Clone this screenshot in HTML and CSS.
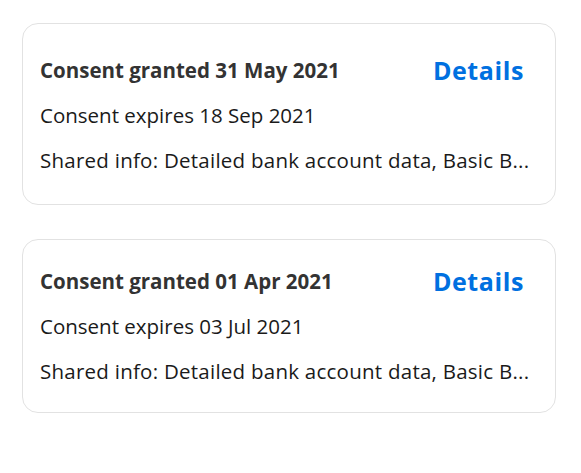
FILE: index.html
```html
<!DOCTYPE html>
<html lang="en">
<head>
<meta charset="utf-8">
<title>Consents</title>
<link rel="stylesheet" href="styles.css">
</head>
<body>
<main class="list">
  <section class="card card--first">
    <div class="card-head">
      <h2 class="card-title">Consent granted 31 May 2021</h2>
      <a class="card-link" href="#">Details</a>
    </div>
    <p class="card-line">Consent expires 18 Sep 2021</p>
    <p class="card-line card-line--shared">Shared info: Detailed bank account data, Basic B...</p>
  </section>
  <section class="card">
    <div class="card-head">
      <h2 class="card-title">Consent granted 01 Apr 2021</h2>
      <a class="card-link" href="#">Details</a>
    </div>
    <p class="card-line">Consent expires 03 Jul 2021</p>
    <p class="card-line card-line--shared">Shared info: Detailed bank account data, Basic B...</p>
  </section>
</main>
</body>
</html>
```
FILE: styles.css
```css
* { box-sizing: border-box; }
html, body { margin: 0; background: #ffffff; }
body {
  font-family: "Open Sans", "Noto Sans", sans-serif;
  color: #1a1a1a;
}
.list {
  display: flex;
  flex-direction: column;
  gap: 34px;
  padding: 23px 25px 0 22px;
}
.card {
  border: 1px solid #e2e2e2;
  border-radius: 16px;
  padding: 28px 31px 27px 17px;
  display: flex;
  flex-direction: column;
  gap: 18px;
}
.card--first { padding-top: 33px; padding-bottom: 30px; }
.card-head {
  display: flex;
  justify-content: space-between;
  align-items: center;
  height: 27px;
}
.card-title {
  margin: 0;
  font-size: 20.5px;
  font-weight: 700;
  color: #333333;
  line-height: 27px;
  white-space: nowrap;
}
.card-link {
  font-size: 25px;
  font-weight: 700;
  letter-spacing: 0.6px;
  color: #0070e0;
  text-decoration: none;
  line-height: 27px;
}
.card-line {
  margin: 0;
  font-size: 20.5px;
  line-height: 27px;
  white-space: nowrap;
}
.card-line--shared { letter-spacing: 0.25px; }
```
